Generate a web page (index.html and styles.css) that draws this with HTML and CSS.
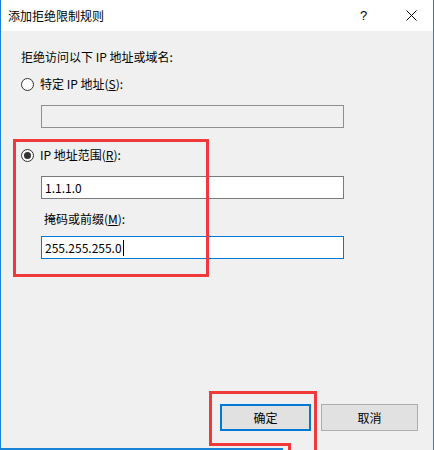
FILE: index.html
```html
<!DOCTYPE html>
<html lang="zh-CN">
<head>
<meta charset="utf-8">
<title>添加拒绝限制规则</title>
<link rel="stylesheet" href="styles.css">
</head>
<body>
<div class="window">
  <div class="titlebar">
    <span class="title">添加拒绝限制规则</span>
    <span class="tb-btn help">?</span>
    <span class="tb-btn close">
      <svg width="11" height="11" viewBox="0 0 11 11"><path d="M0.5 0.5 L10.5 10.5 M10.5 0.5 L0.5 10.5" stroke="#000" stroke-width="1" fill="none"/></svg>
    </span>
  </div>
  <div class="content">
    <div class="label">拒绝访问以下 IP 地址或域名:</div>
    <div class="radio-row r1">
      <span class="radio"></span>
      <span class="rtext">特定 IP 地址(<u>S</u>):</span>
    </div>
    <div class="textbox disabled"></div>
    <div class="radio-row r2">
      <span class="radio checked"></span>
      <span class="rtext">IP 地址范围(<u>R</u>):</span>
    </div>
    <div class="textbox t2"><span class="val">1.1.1.0</span></div>
    <div class="label sub">掩码或前缀(<u>M</u>):</div>
    <div class="textbox focus t3"><span class="val">255.255.255.0</span><span class="caret"></span></div>
  </div>
  <div class="footer">
    <button class="btn ok">确定</button>
    <button class="btn cancel">取消</button>
  </div>
  <div class="mark mark1"></div>
  <div class="mark mark2"></div>
  <div class="mark mark3"></div>
  <div class="mark mark4"></div>
  <div class="bottom-line"></div>
</div>
</body>
</html>
```

FILE: styles.css
```css
* { box-sizing: border-box; }
html, body { margin: 0; padding: 0; background: #f0f0f0; }
body {
  font-family: "Noto Sans CJK SC", "Noto Sans", sans-serif;
  font-size: 12px;
  color: #000;
}
.window {
  position: relative;
  width: 434px;
  height: 450px;
  background: #f0f0f0;
  border-left: 1px solid #1883d7;
  border-right: 1px solid #1883d7;
  display: flex;
  flex-direction: column;
  overflow: hidden;
}
.titlebar {
  height: 31px;
  background: #fff;
  display: flex;
  align-items: center;
  padding-left: 7px;
  flex: none;
}
.title { flex: 1; line-height: 16px; }
.tb-btn {
  width: 45px;
  height: 31px;
  display: flex;
  align-items: center;
  justify-content: center;
}
.help { font-family: "Liberation Sans", sans-serif; font-size: 13px; margin-right: 3px; }
.close { width: 44px; }
.content {
  padding: 18px 0 0 20px;
  flex: none;
}
.label { line-height: 16px; height: 16px; }
.label.sub { margin: 12px 0 0 23px; }
.radio-row {
  display: flex;
  align-items: center;
  height: 16px;
  line-height: 16px;
}
.r1 { margin-top: 11px; }
.r2 { margin-top: 19px; }
.radio {
  width: 13px;
  height: 13px;
  border: 1px solid #333;
  border-radius: 50%;
  background: #fff;
  margin-right: 6px;
  position: relative;
  flex: none;
}
.radio.checked::after {
  content: "";
  position: absolute;
  left: 2px;
  top: 2px;
  width: 7px;
  height: 7px;
  border-radius: 50%;
  background: #333;
}
.textbox {
  width: 303px;
  height: 23px;
  margin: 13px 0 0 20px;
  border: 1px solid #7a7a7a;
  background: #fff;
  display: flex;
  align-items: center;
  padding-left: 3px;
  line-height: 16px;
}
.textbox.disabled { background: #f0f0f0; border-color: #8f8f8f; }
.textbox.t3 { margin-top: 9px; }
.textbox.focus { border-color: #0078d7; }
.caret {
  display: inline-block;
  width: 1px;
  height: 16px;
  background: #000;
  margin-left: 1px;
}
.footer {
  margin-top: auto;
  display: flex;
  justify-content: flex-end;
  gap: 10px;
  padding: 0 15px 19px 0;
}
.btn {
  height: 27px;
  font-family: inherit;
  font-size: 12px;
  background: #e1e1e1;
  border: 1px solid #adadad;
  padding: 0;
  color: #000;
}
.btn.ok { width: 91px; border: 2px solid #0078d7; }
.btn.cancel { width: 97px; }
.mark {
  position: absolute;
  border: 0 solid #f03a3a;
  pointer-events: none;
}
.mark1 { left: 12px; top: 139px; width: 196px; height: 138px; border-width: 3px; }
.mark2 { left: 208px; top: 391px; width: 108px; height: 70px; border-top-width: 3px; border-right-width: 3px; }
.mark3 { left: 208px; top: 391px; width: 82px; height: 55px; border-left-width: 3px; border-bottom-width: 3px; }
.mark4 { left: 287px; top: 443px; width: 3px; height: 10px; border-left-width: 3px; }
.bottom-line {
  position: absolute;
  left: 0;
  bottom: 0;
  width: 282px;
  height: 2px;
  background: #1883d7;
}
```
